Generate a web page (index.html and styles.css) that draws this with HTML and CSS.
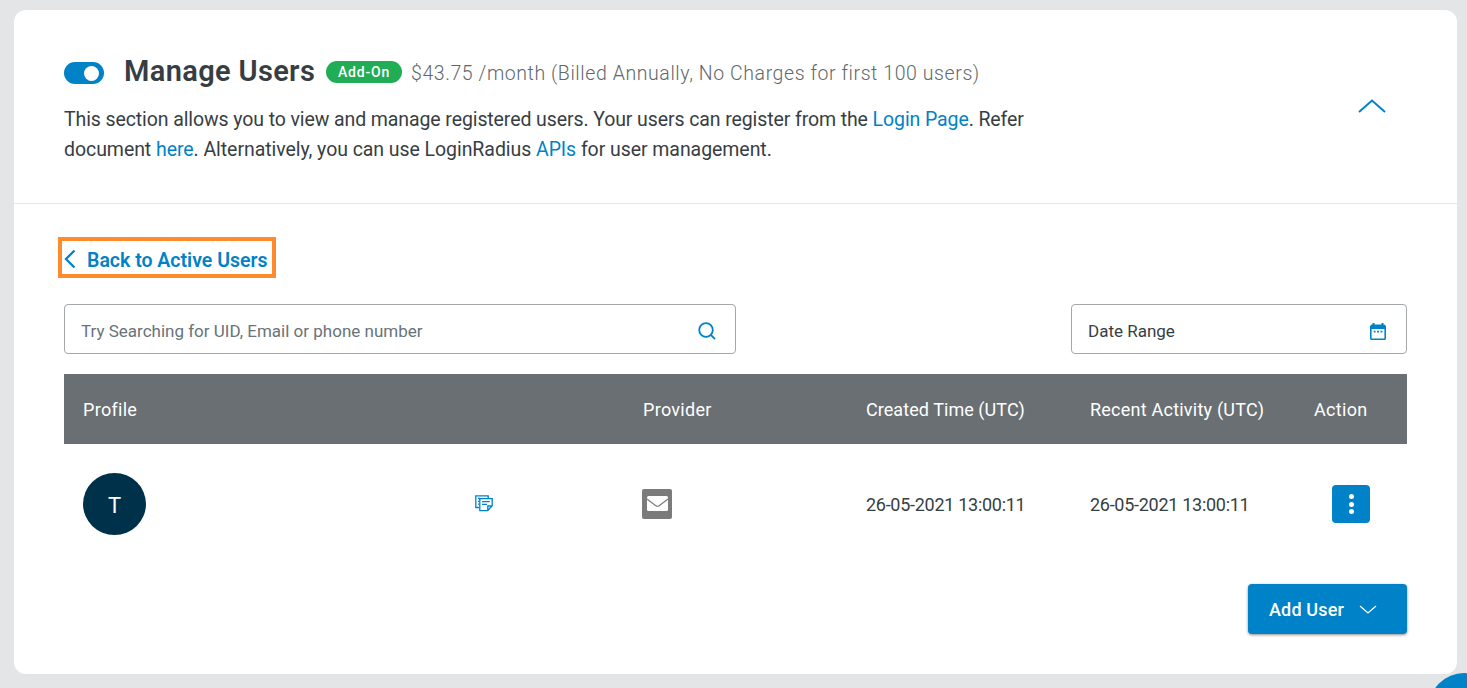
FILE: index.html
```html
<!DOCTYPE html>
<html lang="en">
<head>
<meta charset="utf-8">
<title>Manage Users</title>
<link rel="stylesheet" href="styles.css">
</head>
<body>
<main class="card">
  <header class="card-header">
    <div class="intro">
      <div class="title-row">
        <span class="toggle"><span class="toggle-knob"></span></span>
        <h1 class="title">Manage Users</h1>
        <span class="badge">Add-On</span>
        <span class="price">$43.75 /month (Billed Annually, No Charges for first 100 users)</span>
      </div>
      <p class="description"><span class="line-one">This section allows you to view and manage registered users. Your users can register from the <a class="link">Login Page</a>. Refer</span><br><span class="line-two">document <a class="link">here</a>. Alternatively, you can use LoginRadius <a class="link">APIs</a> for user management.</span></p>
    </div>
    <svg class="collapse" width="30" height="16" viewBox="0 0 30 16"><path d="M2 14 15 2.500 28 14" fill="none" stroke="#0082c8" stroke-width="2"/></svg>
  </header>
  <section class="card-body">
    <a class="back">
      <svg class="back-icon" width="12" height="20" viewBox="0 0 12 20"><path d="M10.500 1.500 2 10l8.500 8.500" fill="none" stroke="#0082c8" stroke-width="2.300"/></svg>
      <span class="back-text">Back to Active Users</span>
    </a>
    <div class="filters">
      <div class="field search">
        <span class="search-text">Try Searching for UID, Email or phone number</span>
        <svg width="18" height="18" viewBox="0 0 18 18" fill="none" stroke="#0082c8" stroke-width="1.800"><circle cx="8" cy="8" r="6.800"/><path d="m12.800 12.800 4.200 4.200"/></svg>
      </div>
      <div class="field date">
        <span class="date-text">Date Range</span>
        <svg class="calendar" width="16" height="17" viewBox="0 0 16 17"><path fill="#0082c8" fill-rule="evenodd" d="M2.500 0h2v1.500h7V0h2v1.500h1L16 3v13l-1 1H1l-1-1V3l1.500-1.500h1zM1.600 6v9.400h12.800V6zM3.700 7.800h1.900v1.700H3.700zm3.400 0H9v1.700H7.100zm3.400 0h1.900v1.700h-1.900z"/></svg>
      </div>
    </div>
    <div class="table">
      <div class="row head">
        <span class="h-profile">Profile</span><span class="h-provider">Provider</span><span class="h-created">Created Time (UTC)</span><span class="h-recent">Recent Activity (UTC)</span><span class="h-action">Action</span>
      </div>
      <div class="row">
        <div class="profile">
          <span class="avatar">T</span>
          <svg class="copy" width="18" height="17" viewBox="0 0 18 17" fill="none" stroke="#0082c8" stroke-width="1.300"><path d="M4 12.500H.8V.8h12.400V3M3 3.500h2M3 6.300h1M3 9.200h1"/><path d="M4.800 3.600h12.400v7.200L12.700 15.600H4.800zM17 11h-4.200v4.400M7 6.600h7.800M7 9.300h5"/></svg>
        </div>
        <svg width="30" height="30" viewBox="0 0 30 30"><rect width="30" height="30" rx="2" fill="#7b7b7b"/><rect x="5" y="7" width="21" height="15" rx="1.500" fill="#fff"/><path d="m5 10 8.500 6.500q2 1.500 4 0L26 10" fill="none" stroke="#7b7b7b" stroke-width="1.200"/></svg>
        <span class="time">26-05-2021 13:00:11</span>
        <span class="time">26-05-2021 13:00:11</span>
        <span class="menu"><i class="dot"></i><i class="dot"></i><i class="dot"></i></span>
      </div>
    </div>
    <button class="add"><span class="add-text">Add User</span><svg class="add-arrow" width="18" height="10" viewBox="0 0 18 10"><path d="m1 1 8 7 8-7" fill="none" stroke="#fff" stroke-width="1.200"/></svg></button>
  </section>
</main>
<svg class="chat" width="39" height="15" viewBox="0 0 39 15"><circle cx="36" cy="35" r="35" fill="#0082c8"/></svg>
</body>
</html>
```
FILE: styles.css
```css
* { box-sizing: border-box; }
body {
  margin: 0;
  height: 688px;
  padding: 10px 10px 14px 14px;
  overflow: hidden;
  background: #e4e5e7;
  color: #373e43;
  font-family: Roboto, "Liberation Sans", sans-serif;
  white-space: nowrap;
}
.card { height: 664px; border-radius: 12px; background: #fff; }
.card-header {
  display: flex;
  justify-content: space-between;
  height: 194px;
  padding: 43px 70px 0 50px;
  border-bottom: 1px solid #e4e5e7;
}
.title-row { display: flex; align-items: center; height: 38px; }
.toggle {
  display: flex;
  justify-content: flex-end;
  width: 40px;
  height: 22px;
  margin: 2px 20px 0 0;
  padding: 4px 5px 3px;
  border-radius: 11px;
  background: #0082c8;
}
.toggle-knob { width: 15px; height: 15px; border-radius: 50%; background: #fff; }
.title { width: 191px; margin: 0 11px 2px 0; font-size: 29px; font-weight: 600; line-height: 36px; letter-spacing: .35px; }
.badge {
  width: 76px;
  height: 22px;
  border-radius: 11px;
  background: #21ad55;
  color: #fff;
  font-size: 14px;
  font-weight: 500;
  line-height: 23px;
  letter-spacing: .8px;
  text-align: center;
}
.price { margin: 3px 0 0 9px; color: #61686c; font-size: 19.500px; font-weight: 300; letter-spacing: .58px; }
.description { margin: 14px 0 0; font-size: 19.500px; line-height: 30px; }
.line-one { letter-spacing: -.1px; }
.line-two { letter-spacing: -.06px; }
.link { color: #0082c8; }
.collapse { margin-top: 45px; }
.card-body { display: flex; flex-direction: column; padding: 33px 50px 0; }
.back {
  display: flex;
  align-items: center;
  align-self: flex-start;
  gap: 11px;
  width: 218px;
  height: 41px;
  margin-left: -6px;
  padding-left: 2px;
  border: 4px solid #ff8b2c;
  color: #0082c8;
  font-size: 19.500px;
  font-weight: 600;
}
.back-icon { margin-top: 2px; }
.back-text { margin-top: 5px; }
.filters { display: flex; justify-content: space-between; margin: 26px 0 20px; }
.field {
  display: flex;
  align-items: center;
  justify-content: space-between;
  height: 50px;
  padding: 3px 20px 0 16px;
  border: 1px solid #a5a8aa;
  border-radius: 4px;
  font-size: 17px;
}
.search { width: 672px; padding-right: 19px; color: #68737a; }
.date { width: 336px; }
.calendar { margin-top: 1px; }
.row {
  display: grid;
  grid-template-columns: 559px 224px 224px 224px 1fr;
  align-items: center;
  height: 120px;
  padding-left: 19px;
}
.head { height: 70px; background: #6a6f73; color: #fff; font-size: 18px; letter-spacing: .3px; }
.h-provider { padding-left: 1px; }
.h-created { letter-spacing: .06px; }
.h-recent { letter-spacing: .23px; }
.profile { display: flex; align-items: center; justify-content: space-between; padding-right: 149px; }
.copy { margin-bottom: 2px; }
.avatar {
  width: 63px;
  height: 62px;
  border-radius: 50%;
  background: #00314b;
  color: #fff;
  font-size: 22px;
  line-height: 65px;
  text-align: center;
}
.time { font-size: 18px; letter-spacing: -.28px; }
.menu {
  display: flex;
  flex-direction: column;
  align-items: center;
  justify-content: center;
  gap: 2.5px;
  width: 38px;
  height: 38px;
  margin-left: 18px;
  border-radius: 4px;
  background: #0082c8;
}
.dot { width: 5px; height: 5px; border-radius: 50%; background: #fff; }
.add {
  display: flex;
  align-items: center;
  align-self: flex-end;
  justify-content: space-between;
  width: 159px;
  height: 50px;
  margin-top: 20px;
  padding: 0 30px 0 21px;
  border: 0;
  border-radius: 4px;
  background: #0082c8;
  box-shadow: 0 1px 3px rgba(0, 0, 0, .45);
  color: #fff;
  font: 500 18px Roboto, "Liberation Sans", sans-serif;
  letter-spacing: .15px;
}
.add-arrow { margin-top: 2px; }
.chat { position: absolute; right: 0; bottom: 0; }
```
